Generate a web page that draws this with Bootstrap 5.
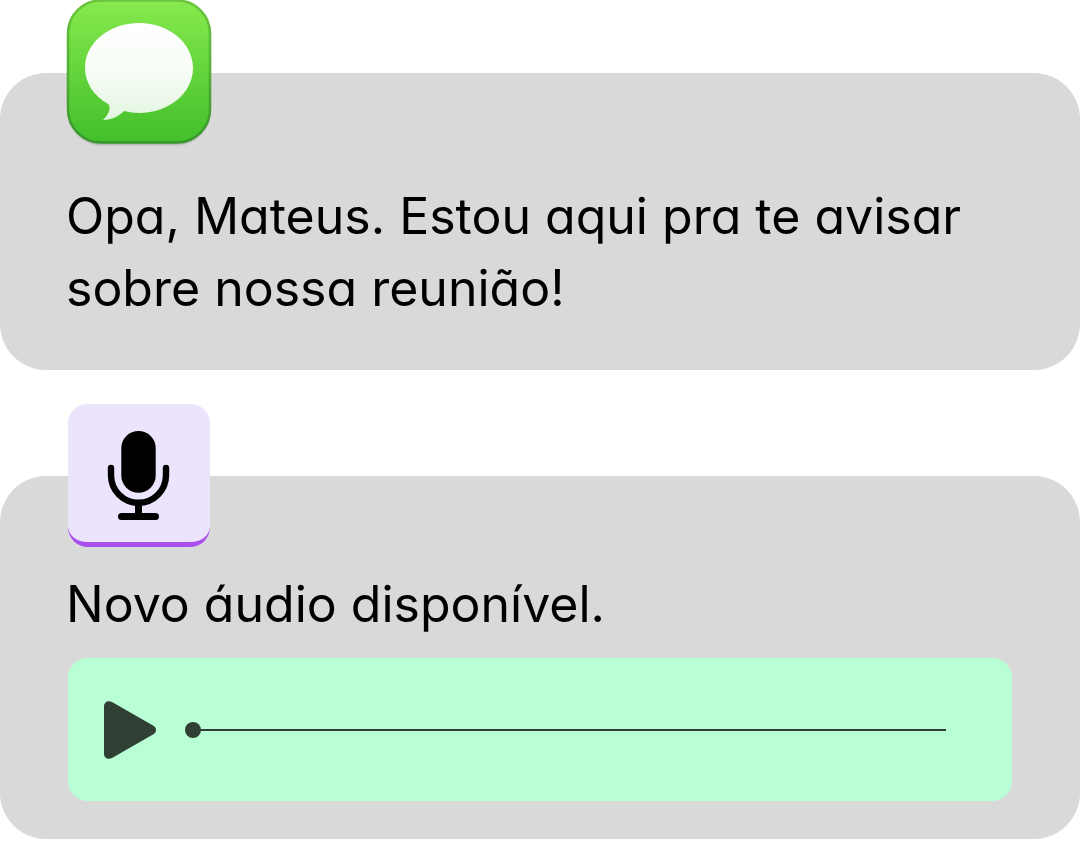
<!DOCTYPE html>
<html lang="pt-BR">
<head>
<meta charset="utf-8">
<meta name="viewport" content="width=device-width, initial-scale=1">
<title>Notificações</title>
<link href="https://cdn.jsdelivr.net/npm/bootstrap@5.3.0/dist/css/bootstrap.min.css" rel="stylesheet">
<script src="https://cdn.jsdelivr.net/npm/bootstrap@5.3.0/dist/js/bootstrap.bundle.min.js" defer></script>
<style>
  body { background: #fff; color: #000; font-family: Inter, "Open Sans", sans-serif; font-feature-settings: "cv11"; }
  .notices { gap: 106px; padding-top: 73px; }
  .notice { background: #d9d9d9; border-radius: 46px; padding: 0 68px 46px; }
  .notice-audio { padding-bottom: 38px; }
  .app-icon { width: 146px; height: 150px; margin: -73px 0 0 -2px; }
  .notice-text { font-size: 50px; line-height: 72px; margin: 30px 0 0 -2px; }
  .mic-tile { width: 142px; height: 143px; margin-top: -72px; border-radius: 20px; background: linear-gradient(#ece3fd 80%, #a94ff0 80%); }
  .notice-audio .notice-text { margin-top: 21px; }
  .player { background: #b9ffd6; border-radius: 20px; height: 143px; margin-top: 18px; padding: 0 66px 0 36px; gap: 29px; }
  .play { line-height: 0; color: #303f34; }
  .seek { appearance: none; -webkit-appearance: none; height: 16px; min-width: 0; background: none; }
  .seek::-webkit-slider-runnable-track { height: 2px; background: #303f34; }
  .seek::-webkit-slider-thumb { -webkit-appearance: none; width: 16px; height: 16px; margin-top: -7px; border-radius: 50%; background: #303f34; }
  .seek::-moz-range-track { height: 2px; background: #303f34; }
  .seek::-moz-range-thumb { width: 16px; height: 16px; border: 0; border-radius: 50%; background: #303f34; }
</style>
</head>
<body>
<main class="notices d-flex flex-column">
  <article class="notice d-flex flex-column">
    <svg class="app-icon flex-shrink-0" viewBox="66 0 146 150" role="img" aria-label="Mensagens">
      <defs>
        <linearGradient id="green" x1="0" y1="0" x2="0" y2="1"><stop offset="0" stop-color="#86ea4d"/><stop offset="1" stop-color="#42bf2b"/></linearGradient>
        <linearGradient id="edge" x1="0" y1="0" x2="0" y2="1"><stop offset="0" stop-color="#6bc53e"/><stop offset="1" stop-color="#36962a"/></linearGradient>
        <linearGradient id="bubble" x1="0" y1="0" x2="0" y2="1"><stop offset="0" stop-color="#fff"/><stop offset=".5" stop-color="#f7fdf6"/><stop offset="1" stop-color="#e2f5df"/></linearGradient>
        <filter id="soft" x="-10%" y="-10%" width="120%" height="120%"><feGaussianBlur stdDeviation="1"/></filter>
      </defs>
      <rect x="68" y="3" width="142" height="142" rx="34" fill="#000" opacity=".2" filter="url(#soft)"/>
      <rect x="68" y="0.500" width="142" height="142" rx="33" fill="url(#green)" stroke="url(#edge)" stroke-width="2.500"/>
      <path fill="url(#bubble)" d="M139 23C109 23 85 43 85 68C85 83 94 96 108 104C111 107 110 113 103 120C112 120 119 116 124 111C129 112 134 113 139 113C169 113 193 93 193 68C193 43 169 23 139 23Z"/>
    </svg>
    <p class="notice-text mb-0">Opa, Mateus. Estou aqui pra te avisar sobre nossa reunião!</p>
  </article>

  <article class="notice notice-audio d-flex flex-column">
    <div class="mic-tile">
      <svg class="d-block" width="142" height="143" viewBox="68 404 142 143" fill="none" stroke="#000" stroke-linecap="round" role="img" aria-label="Microfone">
        <path fill="#ece3fd" stroke="none" d="M68 424a20 20 0 0 1 20-20h102a20 20 0 0 1 20 20v103c-1 9-9 15-20 15H88c-11 0-19-6-20-15Z"/>
        <rect x="121.3" y="431" width="34.4" height="61.7" rx="17.2" fill="#000" stroke="none"/>
        <path stroke-width="6.4" d="M111 468v7.300a27.500 27.500 0 0 0 55 0V468"/>
        <path stroke-width="7" d="M138.500 504v12M121.500 516.500h34"/>
      </svg>
    </div>
    <p class="notice-text mb-0">Novo áudio disponível.</p>
    <div class="player d-flex align-items-center">
      <button type="button" class="play btn border-0 p-0" aria-label="Reproduzir áudio">
        <svg width="52" height="58" viewBox="0 0 52 58" fill="currentColor"><path d="M0 5.500C0 1 4 -1 8 1L49 24.500C53 27 53 31 49 33.500L8 57C4 59 0 57 0 52.500Z"/></svg>
      </button>
      <input type="range" class="seek flex-fill m-0" min="0" max="100" value="0" aria-label="Posição do áudio">
    </div>
  </article>
</main>
</body>
</html>
